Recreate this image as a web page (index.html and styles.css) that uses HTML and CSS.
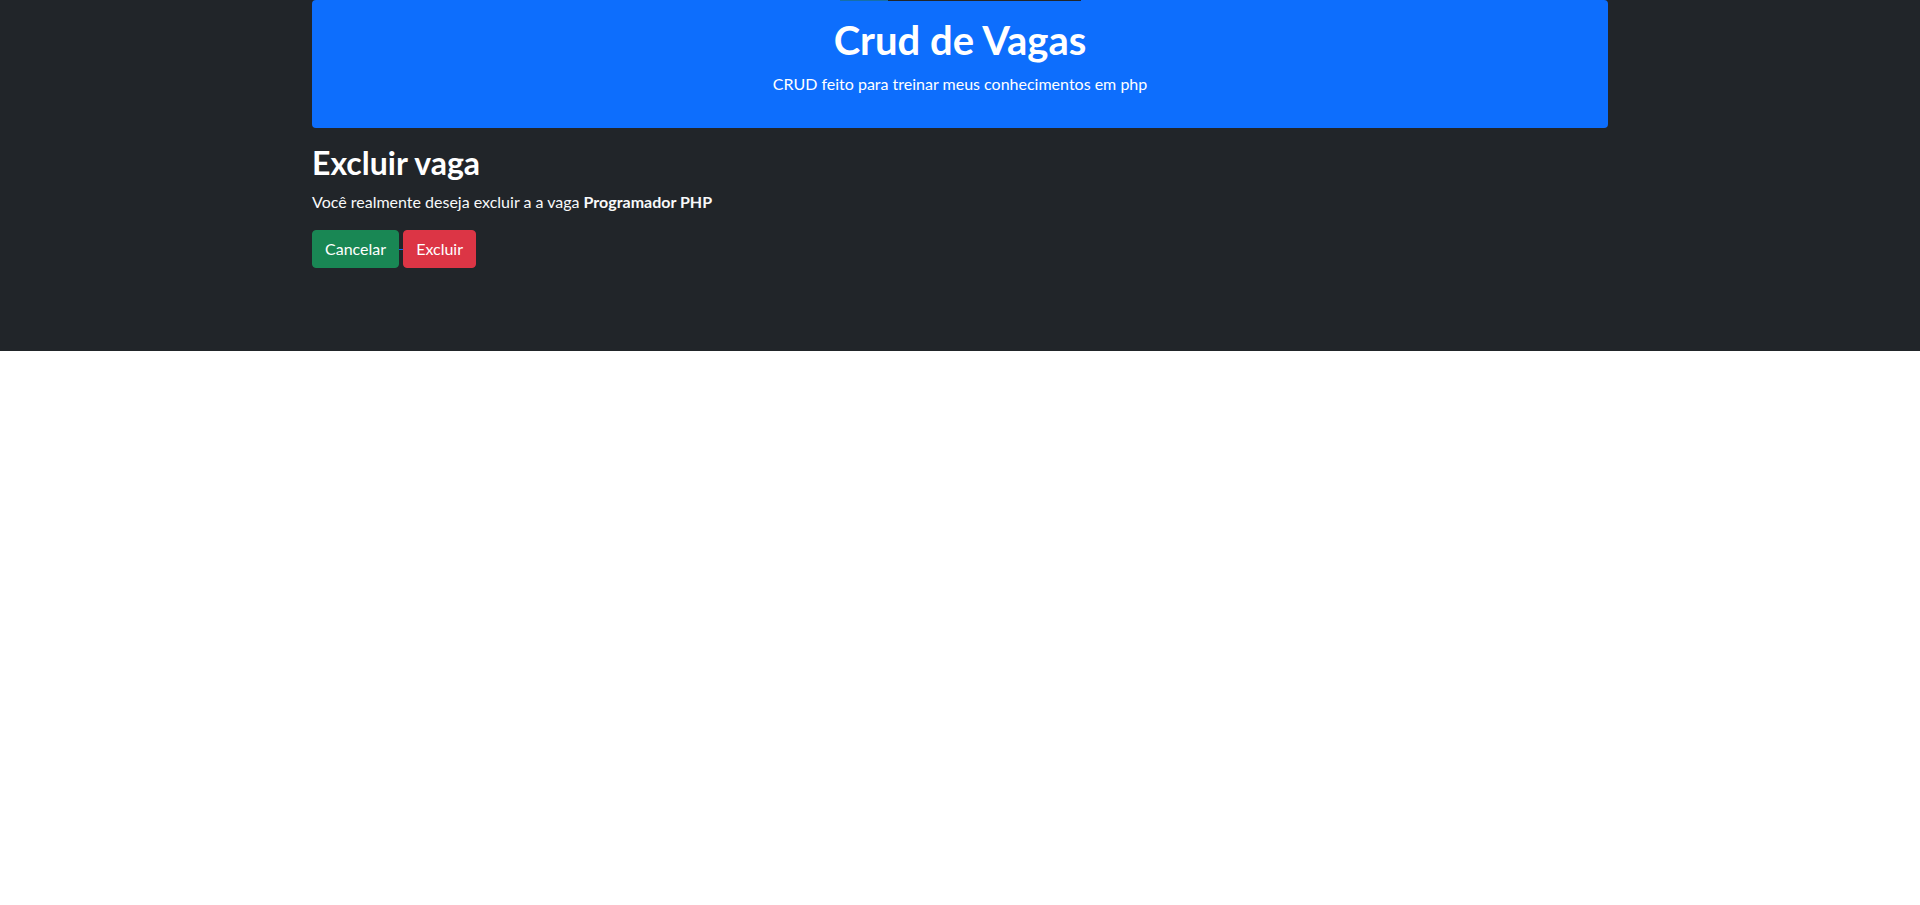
FILE: index.html
```html
<!DOCTYPE html>
<html lang="pt-br">
<head>
<meta charset="utf-8">
<title>Crud de Vagas</title>
<link rel="stylesheet" href="styles.css">
</head>
<body>
<div class="page">
  <div class="container">
    <header class="banner">
      <span class="glitch"><span class="glitch-a"></span><span class="glitch-b"></span></span>
      <h1 class="banner-title">Crud de Vagas</h1>
      <p class="banner-sub">CRUD feito para treinar meus conhecimentos em php</p>
    </header>
    <main class="content">
      <h2 class="title">Excluir vaga</h2>
      <p class="question">Você realmente deseja excluir a a vaga <strong>Programador PHP</strong></p>
      <div class="actions"><a class="back-link" href="#"><button type="button" class="btn btn-success">Cancelar</button> </a><button type="button" class="btn btn-danger">Excluir</button></div>
    </main>
  </div>
</div>
</body>
</html>
```
FILE: styles.css
```css
html {
  background: #ffffff;
}
body {
  margin: 0;
  font-family: "Lato", "Open Sans", sans-serif;
  font-size: 16px;
  line-height: 24px;
  color: #f8f9fa;
}
.page {
  background: #212529;
  padding-bottom: 82.6px;
}
.container {
  width: 1320px;
  margin: 0 auto;
  padding: 0 12px;
  box-sizing: border-box;
}
.banner {
  position: relative;
  background: #0d6efd;
  border-radius: 4px;
  padding: 16px;
  text-align: center;
  color: #ffffff;
}
.glitch {
  position: absolute;
  top: 0;
  left: 528px;
  display: flex;
  height: 1px;
}
.glitch-a {
  width: 48px;
  background: #166fa8;
}
.glitch-b {
  width: 193px;
  background: #212529;
}
.banner-title {
  margin: 0 0 8px;
  font-size: 40px;
  line-height: 48px;
  font-weight: 700;
}
.banner-sub {
  margin: 0 0 16px;
  font-size: 16px;
  line-height: 24px;
  font-weight: 400;
}
.content {
  padding-top: 16px;
}
.title {
  margin: 0 0 8px;
  font-size: 32px;
  line-height: 38.4px;
  font-weight: 700;
  color: #ffffff;
}
.question {
  margin: 0 0 16px;
}
.question strong {
  font-weight: 700;
}
.actions {
  height: 38px;
}
.back-link {
  color: #0d6efd;
  text-decoration: underline;
}
.btn {
  display: inline-block;
  vertical-align: top;
  font-family: inherit;
  font-size: 16px;
  line-height: 24px;
  font-weight: 400;
  padding: 6px 12px;
  border: 1px solid transparent;
  border-radius: 4px;
  color: #ffffff;
  cursor: pointer;
  margin: 0;
}
.btn-success {
  background: #198754;
  border-color: #198754;
}
.btn-danger {
  background: #dc3545;
  border-color: #dc3545;
}
```
